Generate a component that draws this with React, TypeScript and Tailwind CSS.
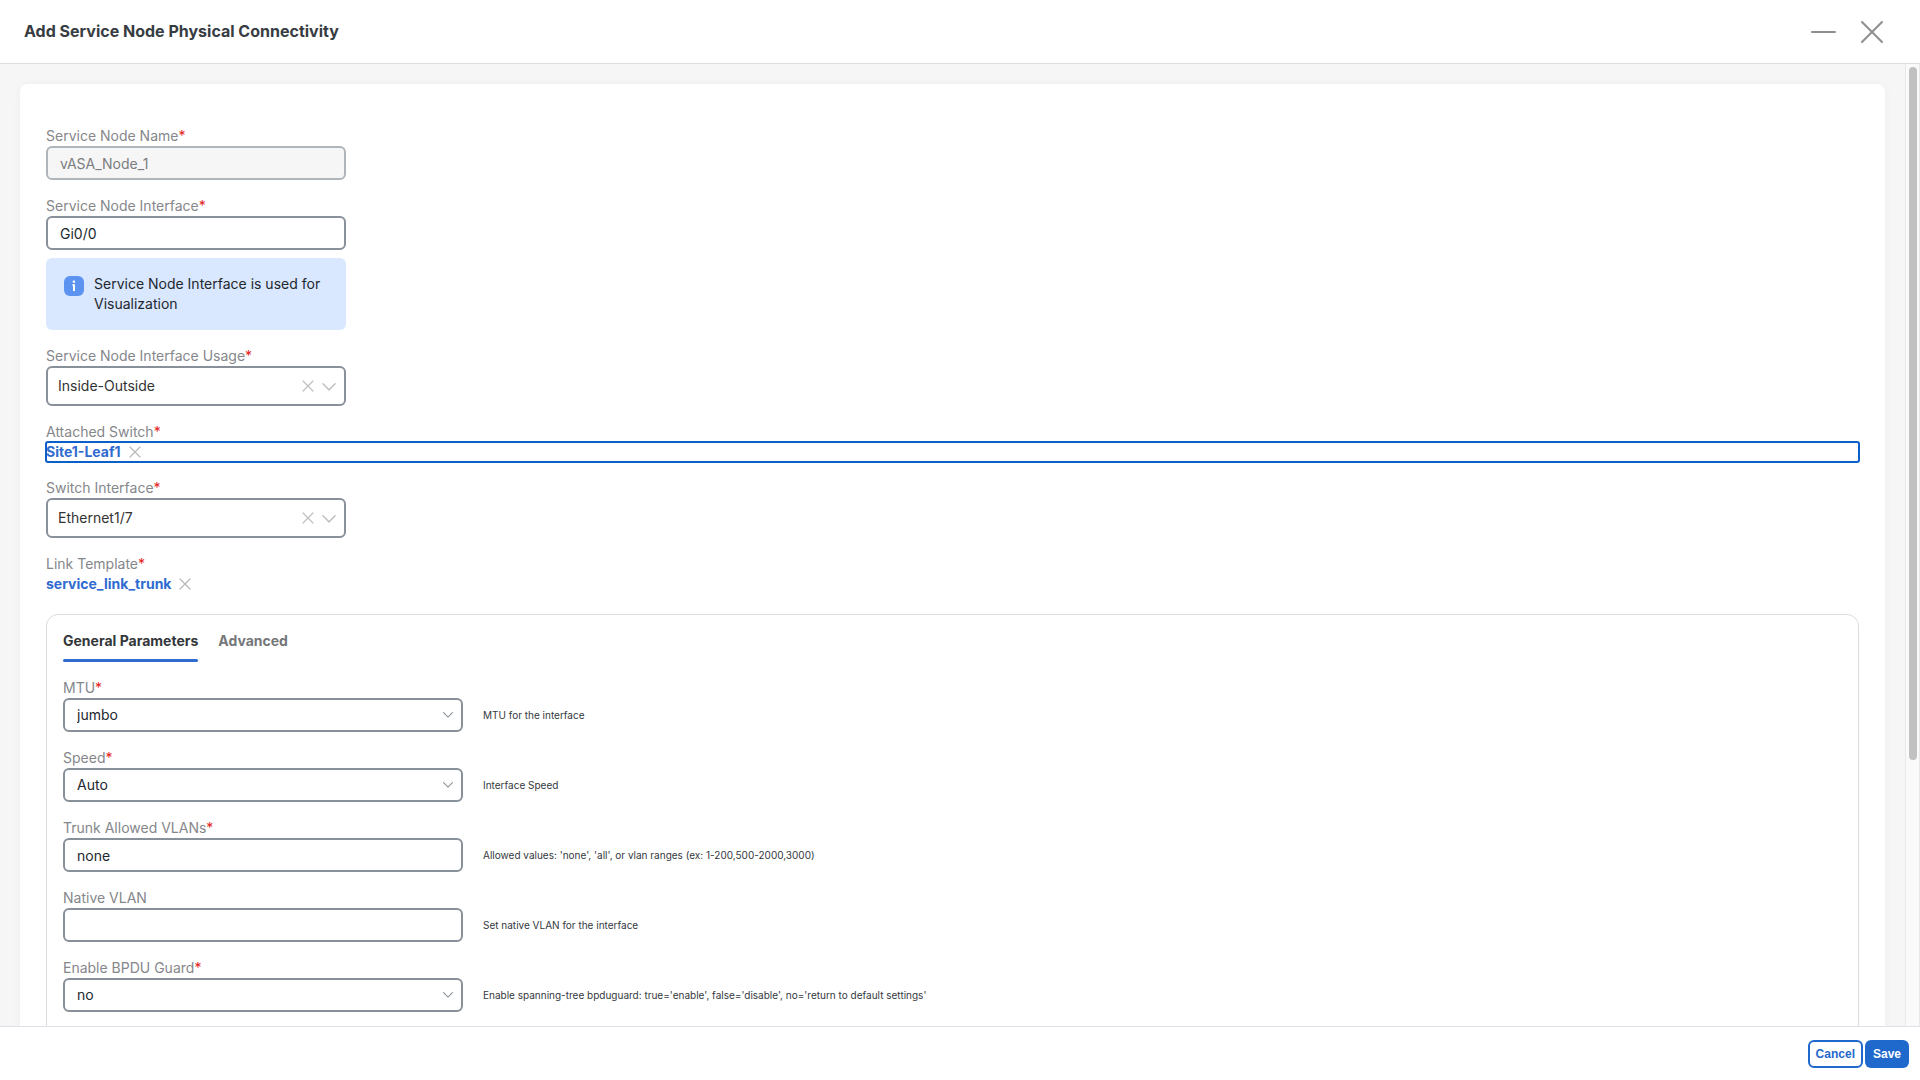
import type { ReactNode } from 'react'


type Param = {
  id: string
  label: string
  value: string
  help: string
  required?: boolean
  select?: boolean
}

const PARAMS: Param[] = [
  { id: 'mtu', label: 'MTU', value: 'jumbo', help: 'MTU for the interface', required: true, select: true },
  { id: 'speed', label: 'Speed', value: 'Auto', help: 'Interface Speed', required: true, select: true },
  {
    id: 'vlans',
    label: 'Trunk Allowed VLANs',
    value: 'none',
    help: "Allowed values: 'none', 'all', or vlan ranges (ex: 1-200,500-2000,3000)",
    required: true,
  },
  { id: 'native', label: 'Native VLAN', value: '', help: 'Set native VLAN for the interface' },
  {
    id: 'bpdu',
    label: 'Enable BPDU Guard',
    value: 'no',
    help: "Enable spanning-tree bpduguard: true='enable', false='disable', no='return to default settings'",
    required: true,
    select: true,
  },
]

const FIELD = 'block w-full h-[34px] rounded-md border-2 border-[#889099] bg-white px-3 text-sm text-[#23282e] outline-none'

function Cross({ className }: { className: string }) {
  return (
    <svg className={className} viewBox="0 0 12 12" fill="none" stroke="currentColor" strokeWidth="1.2" strokeLinecap="round">
      <path d="M1 1l10 10M11 1L1 11" />
    </svg>
  )
}

function Chevron({ className }: { className: string }) {
  return (
    <svg className={className} viewBox="0 0 12 7" fill="none" stroke="currentColor" strokeWidth="1.3" strokeLinecap="round">
      <path d="M0.7 0.7L6 6L11.3 0.7" />
    </svg>
  )
}

function Label({ id, required = true, children }: { id: string; required?: boolean; children: ReactNode }) {
  return (
    <label htmlFor={id} className="block w-fit text-sm leading-5 text-[#85878b]">
      {children}
      {required && <span className="text-[#e2231a]">*</span>}
    </label>
  )
}

function ComboBox({ id, value }: { id: string; value: string }) {
  return (
    <div className="relative w-[300px]">
      <select
        id={id}
        defaultValue={value}
        className="block h-10 w-full appearance-none rounded-md border-2 border-[#889099] bg-white px-[10px] text-sm text-[#333] outline-none">
        <option>{value}</option>
      </select>
      <div className="pointer-events-none absolute inset-y-0 right-[10px] flex items-center gap-2 text-[#c0c0c0]">
        <Cross className="h-3 w-3" />
        <Chevron className="mt-[2px] h-[8px] w-[14px]" />
      </div>
    </div>
  )
}

function PickedLink({ id, text, focused = false }: { id: string; text: string; focused?: boolean }) {
  return (
    <div
      className={
        focused
          ? 'flex h-5 items-center gap-2 rounded-xs outline-2 -outline-offset-1 outline-[#0a60c8]'
          : 'flex h-5 items-center gap-2'
      }>
      <a id={id} href="#" className="text-sm leading-5 font-bold text-[#2f6bd0]">{text}</a>
      <button type="button" aria-label={`Clear ${text}`} className="text-[#b8b8b8]">
        <Cross className="h-3 w-3" />
      </button>
    </div>
  )
}

function ParamRow({ id, label, value, help, required = false, select = false }: Param) {
  return (
    <div>
      <Label id={id} required={required}>{label}</Label>
      <div className="flex items-center gap-5">
        <div className="relative w-[400px]">
          {select ? (
            <>
              <select id={id} defaultValue={value} className={`${FIELD} appearance-none`}>
                <option>{value}</option>
              </select>
              <div className="pointer-events-none absolute inset-y-0 right-[10px] flex items-center text-[#889099]">
                <Chevron className="h-[6px] w-[10px]" />
              </div>
            </>
          ) : (
            <input id={id} type="text" defaultValue={value} className={FIELD} />
          )}
        </div>
        <p className="text-[10px] leading-4 text-[#33383e]">{help}</p>
      </div>
    </div>
  )
}

export default function App() {
  return (
    <div className="flex h-screen flex-col overflow-hidden bg-white font-['Inter',sans-serif]">
      <header className="flex h-16 shrink-0 items-center justify-between border-b border-[#dedede] pr-9 pl-6">
        <h1 className="pb-[2px] text-base font-bold text-[#373c42]">Add Service Node Physical Connectivity</h1>
        <div className="flex items-center gap-6 text-[#8e8e8e]">
          <button type="button" aria-label="Minimize">
            <svg className="h-6 w-[26px]" viewBox="0 0 26 24" stroke="currentColor" strokeWidth="2" strokeLinecap="round">
              <path d="M2 12h23" />
            </svg>
          </button>
          <button type="button" aria-label="Close">
            <svg className="h-6 w-6" viewBox="0 0 24 24" stroke="currentColor" strokeWidth="2" strokeLinecap="round">
              <path d="M2 2l20 20M22 2L2 22" />
            </svg>
          </button>
        </div>
      </header>

      <div className="flex min-h-0 flex-1">
        <main className="min-w-0 flex-1 overflow-hidden bg-[#f6f6f6] p-5">
          <form className="flex flex-col gap-4 rounded-lg bg-white px-[26px] pt-[42px] pb-10 shadow-[0_0_8px_rgba(0,0,0,0.04)]">
            <div>
              <Label id="node-name">Service Node Name</Label>
              <div className="w-[300px]">
                <input
                  id="node-name"
                  type="text"
                  disabled
                  defaultValue="vASA_Node_1"
                  className="block h-[34px] w-full rounded-md border-2 border-[#b0b5ba] bg-[#f6f6f6] px-3 text-sm text-[#7b7d80]"
                />
              </div>
            </div>

            <div>
              <Label id="node-interface">Service Node Interface</Label>
              <div className="w-[300px]">
                <input id="node-interface" type="text" defaultValue="Gi0/0" className={FIELD} />
                <div className="mt-2 flex gap-[10px] rounded-md bg-[#d9e7ff] py-4 pr-4 pl-[18px]">
                  <svg className="mt-[2px] h-5 w-5 shrink-0" viewBox="0 0 20 20">
                    <rect width="20" height="20" rx="6" fill="#5c92f0" />
                    <rect x="8.8" y="4.6" width="2.2" height="2.2" rx="0.6" fill="#fff" />
                    <path d="M8.2 8.2h2.8v6.8H9V9.6h-0.8z" fill="#fff" />
                  </svg>
                  <p className="text-sm leading-5 text-[#23282e]">Service Node Interface is used for Visualization</p>
                </div>
              </div>
            </div>

            <div>
              <Label id="usage">Service Node Interface Usage</Label>
              <ComboBox id="usage" value="Inside-Outside" />
            </div>

            <div>
              <Label id="switch">Attached Switch</Label>
              <PickedLink id="switch" text="Site1-Leaf1" focused />
            </div>

            <div>
              <Label id="switch-interface">Switch Interface</Label>
              <ComboBox id="switch-interface" value="Ethernet1/7" />
            </div>

            <div>
              <Label id="template">Link Template</Label>
              <PickedLink id="template" text="service_link_trunk" />
            </div>

            <section className="mt-1 rounded-xl border border-[#dcdcdc] px-4 pb-6">
              <div role="tablist" className="flex gap-5 pt-4 text-sm leading-5 font-bold">
                <button type="button" role="tab" aria-selected="true" className="text-[#33363a]">
                  General Parameters
                  <span className="mt-2 block h-[3px] rounded-full bg-[#2f6bd0]" />
                </button>
                <button type="button" role="tab" aria-selected="false" className="self-start text-[#75777a]">
                  Advanced
                </button>
              </div>
              <div className="mt-4 flex flex-col gap-4">
                {PARAMS.map((param) => (
                  <ParamRow key={param.id} {...param} />
                ))}
              </div>
            </section>
          </form>
        </main>

        {/* scroll rail */}
        <div className="w-[15px] shrink-0 border-x border-[#e8e8e8] bg-[#fafafa] px-[2px] pt-[3px]">
          <div className="mx-auto h-13/18 w-2 rounded-full bg-[#c1c1c1]" />
        </div>
      </div>

      <footer className="flex h-[54px] shrink-0 items-center justify-end gap-[2px] border-t border-[#e0e0e8] pr-[11px] font-['Liberation_Sans',Arial,sans-serif] text-xs font-bold">
        <button type="button" className="h-7 rounded-md border-2 border-[#1f69cc] px-[6px] text-[#1f69cc]">Cancel</button>
        <button type="button" className="h-7 rounded-md bg-[#1f69cc] px-2 text-white">Save</button>
      </footer>
    </div>
  )
}
